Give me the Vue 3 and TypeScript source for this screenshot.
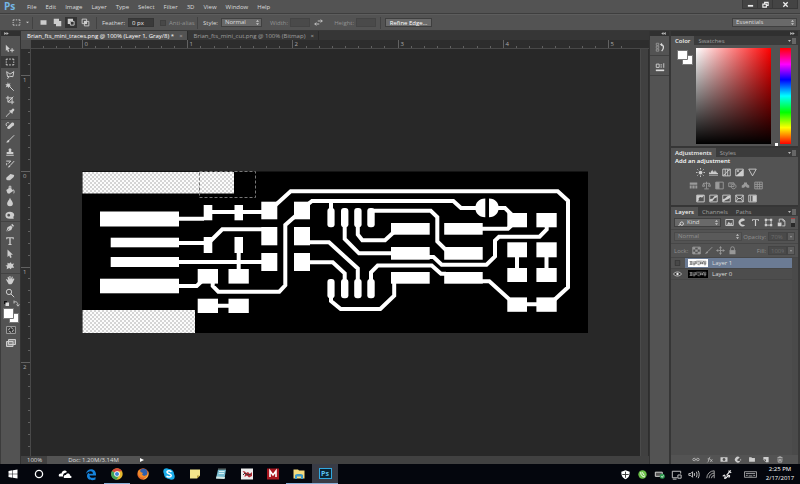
<script setup lang="ts">
import { computed, onBeforeUnmount, onMounted, ref } from 'vue'

interface Glyph { name: string; fill?: string; line?: string }
interface Layer { name: string; visible: boolean; selected: boolean; inverse: boolean }

const menus = ['File', 'Edit', 'Image', 'Layer', 'Type', 'Select', 'Filter', '3D', 'View', 'Window', 'Help']

const activeTool = ref('Rectangular marquee')
const feather = ref('0 px')
const antiAlias = ref(false)

const toolGroups: Glyph[][] = [
  [
    { name: 'Move', fill: 'M1 1L6 6H4L5 9L3.500 9.500L2.500 7L1 8.500Z', line: 'M6 7.500H11M8.500 5V10' },
    { name: 'Rectangular marquee', line: 'M1.500 4V2.500H3.500M5 2.500H7M8.500 2.500H10.500V4M10.500 5.500V7M10.500 8.500V9.500H8.500M7 9.500H5M3.500 9.500H1.500V8M1.500 6.800V5.300' },
    { name: 'Polygonal lasso', line: 'M3 8L2 2L6 5L10.500 2L9.500 8L5.500 7.500L3 8L4.500 9L3 10.500' },
    { name: 'Magic wand', fill: 'M3.500 0L4.300 2.500L6.700 1.500L5.500 3.600L7.500 5L5 5.200L4.500 7.500L3 5.500L.8 6.500L1.900 4.200L.3 2.700L2.700 2.600Z', line: 'M5 5L10.500 10.500' },
    { name: 'Crop', line: 'M3.500 1V8.500H11M1 3.500H8.500V11M3.500 8.500L10 2' },
    { name: 'Eyedropper', fill: 'M7 3L9 1C10 0 12 2 11 3L9 5L9.500 6L8.500 7L5 3.500L6 2.500Z', line: 'M6.500 5L2.500 9L1.500 10.500' },
  ],
  [
    { name: 'Healing brush', fill: 'M3 7L8 2C10 1 12 3 10.500 5L6 9C4 10.500 1.500 9 3 7Z', line: 'M2 6C0 3 3 .8 5 2.500' },
    { name: 'Brush', fill: 'M1 10C3 9.500 2.500 7.500 4.500 7L5.500 8C5 10 3 10.500 1 10Z', line: 'M5 7.500L11 1.500' },
    { name: 'Clone stamp', fill: 'M4.500 6L4.500 4C3 1 9 1 7.500 4V6H10V8.500H2V6ZM1.500 9.300H10.500V10.600H1.500Z' },
    { name: 'History brush', fill: 'M3 10C4.500 9.500 4 8 5.500 7.500L6.500 8.500C6 10 5 10.500 3 10Z', line: 'M6 8L11 2.500M1.500 2.500H7L4 5.500M2 5V7.500' },
    { name: 'Eraser', fill: 'M1.500 7L6.500 2.500L11 3.500L10.500 6L6 10H3L1.500 9Z' },
    { name: 'Paint bucket', fill: 'M1.500 6L6 3L10 7L5 10.500L3 10Z', line: 'M5 5V1.500H7V5M9.500 5.500C11.500 6 11 9 10.500 10' },
    { name: 'Blur', fill: 'M6 1C7 4 9.500 5.500 9.500 8C9.500 12 2.500 12 2.500 8C2.500 5.500 5 4 6 1Z' },
    { name: 'Sponge', fill: 'M6 2A5.500 4.200 0 1 0 6 10.400H10.500L10 8.500A5 4 0 0 0 6 2ZM4.500 4.500A1.700 1.700 0 1 1 4.400 4.500Z' },
  ],
  [
    { name: 'Pen', fill: 'M1.500 10.500L3 5L7 3L9 5L7.500 8.500L2.800 10.200L5.300 7L4.700 6.500ZM7.500 2.500L8.500 1L11 3.500L9.500 4.500Z' },
    { name: 'Type', fill: 'M1.500 1.500H10.500V4H9.500L9 2.700H6.800V9.500L8 10V10.700H4V10L5.200 9.500V2.700H3L2.500 4H1.500Z' },
    { name: 'Path selection', fill: 'M3 .5L9.500 7H6.800L8 10L6.300 10.700L5 7.800L3 9.500Z' },
    { name: 'Custom shape', fill: 'M3 2L5 3L7 1.500L8 3.500L11 3L9.500 5.500L11 8L8 8L7 10L5 8.500L2 10L2.500 7L.5 5.500L3 5Z' },
  ],
  [
    { name: 'Hand', fill: 'M1 5L2.500 5L4 6.500L3 2.500L4.300 2.200L5.300 5L5.300 1.200H6.500L7 5L8.300 1.800L9.400 2.200L8.800 5.500L10.500 4L11.300 4.800L9 9.500L7.500 11H4.500Z' },
    { name: 'Zoom', line: 'M8 4.700A3.200 3.200 0 1 1 1.600 4.700A3.200 3.200 0 1 1 8 4.700M7 7L11 11' },
  ],
]

const selectionModes: Glyph[] = [
  { name: 'New selection', fill: 'M2 3H10V9H2Z' },
  { name: 'Add to selection', fill: 'M1 1H8V4H11V11H4V8H1Z' },
  { name: 'Subtract from selection', fill: 'M1 1H8V4H4V8H1Z', line: 'M4.500 4.500H9.500V9.500H4.500Z' },
  { name: 'Intersect with selection', fill: 'M4 4H8V8H4Z', line: 'M1.500 1.500H7.500V7.500H1.500ZM4.500 4.500H10.500V10.500H4.500Z' },
]

const adjustmentRows: Glyph[][] = [
  [
    { name: 'Brightness', fill: 'M8.500 6A2.500 2.500 0 1 1 3.500 6A2.500 2.500 0 1 1 8.500 6', line: 'M6 0V2M6 10V12M0 6H2M10 6H12M1.800 1.800L3 3M9 9L10.200 10.200M10.200 1.800L9 3M3 9L1.800 10.200' },
    { name: 'Levels', fill: 'M0 8V7L1 5L2 7L3 3L4 5L5 2L6 6L7 3L8 6L9 3L10 6L12 7V8ZM0 9H12V10H0Z' },
    { name: 'Curves', line: 'M1 1.500H11V10.500H1ZM1 10C6 9 6 3 11 2M4.300 1.500V10.500M7.600 1.500V10.500' },
    { name: 'Exposure', fill: 'M11 1.500V10.500H1Z', line: 'M1 1.500H11V10.500H1ZM2.500 4H5.500M4 2.500V5.500' },
    { name: 'Vibrance', line: 'M1 1.500H11L6 10.500Z' },
  ],
  [
    { name: 'Hue', fill: 'M1 2H11V5H1ZM1 6H3.500V10H1ZM4.500 6H7.500V10H4.500ZM8.500 6H11V10H8.500Z' },
    { name: 'Color balance', line: 'M2 3H10M6 1V10M2 3L.7 7H3.500ZM10 3L8.500 7H11.300ZM3 10.500H9' },
    { name: 'Black and white', fill: 'M1 1.500H6V10.500H1Z', line: 'M1 1.500H11V10.500H1Z' },
    { name: 'Photo filter', line: 'M1 2.500H8V7.500H1ZM7.500 4A3.200 3.200 0 1 1 7.400 4M3 4H6' },
    { name: 'Channel mixer', fill: 'M4 4V2H8V4L11 6V9H8L6 7L4 9H1V6Z' },
    { name: 'Color lookup', line: 'M1 1.500H11V10.500H1ZM1 4.500H11M1 7.500H11M4.300 1.500V10.500M7.600 1.500V10.500' },
  ],
  [
    { name: 'Invert', fill: 'M1 1.500H11L8 5A2.500 2.500 0 0 0 4 8L1 10.500Z', line: 'M1 1.500H11V10.500H1Z' },
    { name: 'Posterize', fill: 'M1 7L5 6L7 3L11 2V4L7 6L5 9L1 10Z', line: 'M1 1.500H11V10.500H1Z' },
    { name: 'Threshold', fill: 'M1 7L4 6L7 3L11 2V5L8 7L5 8L1 10.500Z', line: 'M1 1.500H11V10.500H1Z' },
    { name: 'Selective color', line: 'M1 1.500H11V10.500H1ZM1 1.500L4 6L1 10.500M11 1.500L8 6L11 10.500M4 6H8' },
    { name: 'Gradient map', fill: 'M6 2H11V10H6Z', line: 'M1 1.500H11V10.500H1ZM3.500 2V10' },
  ],
]

const filterGlyphs: Glyph[] = [
  { name: 'Pixel layers', fill: 'M2.500 9L5 5L7 7.500L8.500 6L10 9Z', line: 'M1 2H11V10H1Z' },
  { name: 'Adjustment layers', fill: 'M9.500 2.500A5 5 0 1 0 9.500 9.500C7 9 3 9 3.500 6C4 4 8 4 9.500 2.500Z' },
  { name: 'Type layers', fill: 'M1.500 1.500H10.500V4H9.500L9 2.700H6.800V10.500H5.200V2.700H3L2.500 4H1.500Z' },
  { name: 'Shape layers', fill: 'M1 1H4V4H1ZM8 1H11V4H8ZM1 8H4V11H1ZM8 8H11V11H8Z', line: 'M2.500 3V9M9.500 3V9M3 2.500H9M3 9.500H9' },
  { name: 'Smart objects', fill: 'M1 6H6V11H1Z', line: 'M3 5V1.500H8L10.500 4V10.500H7M8 1.500V4H10.500' },
]

const lockGlyphs: Glyph[] = [
  { name: 'Lock transparent pixels', fill: 'M1 1.500H4.300V4.500H1ZM7.600 1.500H11V4.500H7.600ZM4.300 4.500H7.600V7.500H4.300ZM1 7.500H4.300V10.500H1ZM7.600 7.500H11V10.500H7.600Z', line: 'M1 1.500H11V10.500H1Z' },
  { name: 'Lock image pixels', fill: 'M1 10C3 9.500 2.500 7.500 4.500 7L5.500 8C5 10 3 10.500 1 10Z', line: 'M5 7.500L11 1.500' },
  { name: 'Lock position', fill: 'M6 0L8 3H4ZM6 12L4 9H8ZM0 6L3 4V8ZM12 6L9 8V4Z', line: 'M6 3V9M3 6H9' },
  { name: 'Lock all', fill: 'M2 5.500H10V11H2Z', line: 'M3.500 6V3.500A2.500 2.500 0 0 1 8.500 3.500V6' },
]

const layerActions: Glyph[] = [
  { name: 'Link layers', line: 'M5 4H2.500A2 2 0 0 0 2.500 8H5M7 4H9.500A2 2 0 0 1 9.500 8H7M4 6H8' },
  { name: 'Layer style', line: 'M1.500 11C4 11 3.500 2 6.500 1.500M2 5H6M6.500 5.500L10 10M10 5.500L6.500 10' },
  { name: 'Add mask', fill: 'M0 2H12V10H0ZM6 3.500A2.500 2.500 0 1 0 6.100 3.500Z' },
  { name: 'Adjustment layer', fill: 'M9 2.500A5 5 0 1 0 9.500 9.500L8.500 8C6 10 3 7 6 5Z', line: 'M10.500 5V8' },
  { name: 'New group', fill: 'M1 2H5L6 3.500H11V10H1Z' },
  { name: 'New layer', fill: 'M1.500 1.500H10.500V10.500H6V6H1.500Z', line: 'M1.500 6L6 10.500' },
  { name: 'Delete', line: 'M1.500 3H10.500M4 3V1.500H8V3M2.500 4.500L3 10.500H9L9.500 4.500M5 5V9M7 5V9' },
]

const layers = ref<Layer[]>([
  { name: 'Layer 1', visible: false, selected: true, inverse: true },
  { name: 'Layer 0', visible: true, selected: false, inverse: false },
])

/* Rulers hold eight ticks per inch, measured from the board's top-left corner */
const canvas = ref<HTMLElement | null>(null)
const canvasSize = ref({ width: 610, height: 407 })
let observer: ResizeObserver | undefined

onMounted(() => {
  observer = new ResizeObserver(([entry]) => {
    canvasSize.value = { width: entry.contentRect.width, height: entry.contentRect.height }
  })
  if (canvas.value) observer.observe(canvas.value)
})
onBeforeUnmount(() => observer?.disconnect())

function ticks(length: number, boardLength: number, step: number) {
  const origin = Math.floor((length - boardLength) / 2)
  const first = Math.ceil(-origin / step)
  const last = Math.floor((length - 9 - origin) / step)
  return Array.from({ length: Math.max(0, last - first + 1) }, (_, i) => first + i).map((i) => ({
    at: Math.round(origin + i * step) + 0.5,
    label: i % 8 === 0 ? String(Math.abs(i / 8)) : '',
  }))
}
const hTicks = computed(() => ticks(canvasSize.value.width, 507, 13.15))
const vTicks = computed(() => ticks(canvasSize.value.height, 163, 11.94))

/* Copper pads: x, y, width, height, corner radius */
const pads: number[][] = [
  [100, 211.5, 79, 15, 0], [110.7, 237.7, 68.3, 9.6, 0], [110.7, 257, 68.3, 10, 0], [100, 278.7, 79, 14.6, 0],
  [203.7, 205, 8.6, 15.3, 0], [234.5, 205, 8.5, 15.3, 0], [203.7, 237, 8.6, 16, 0], [234.5, 237, 8.5, 16, 0],
  [197.7, 269, 20.3, 14.6, 0], [228.5, 269, 20.3, 14.6, 0], [197.7, 298.7, 20.3, 14.3, 0], [228.5, 298.7, 20.3, 14.3, 0],
  [261.3, 201.7, 16, 17.6, 0], [261.3, 227, 16, 18.3, 0], [261.3, 253, 16, 18, 0],
  [294, 201.7, 16, 17.6, 0], [294, 227, 16, 18.3, 0], [294, 253, 16, 18, 0],
  [327.4, 208, 7.2, 19.3, 3], [341, 208, 7.4, 19.3, 3], [354.2, 208, 7.4, 19.3, 3], [367.3, 208, 7.4, 19.3, 3],
  [327.4, 279, 7.2, 19.3, 3], [341, 279, 7.4, 19.3, 3], [354.2, 279, 7.4, 19.3, 3], [367.3, 279, 7.4, 19.3, 3],
  [391, 223, 38.7, 11.7, 0], [391, 247, 38.7, 12.7, 0], [391, 272, 38.7, 11.7, 0],
  [444.2, 223, 38.5, 11.7, 0], [444.2, 247, 38.5, 12.7, 0], [444.2, 272, 38.5, 11.7, 0],
  [507.3, 213, 19.7, 14.3, 0], [536.4, 213, 20.3, 14.3, 0], [507.3, 242.3, 19.7, 15, 0], [536.4, 242.3, 20.3, 15, 0],
  [507.3, 268, 19.7, 14, 0], [536.4, 268, 20.3, 14, 0], [507.3, 297.4, 19.7, 14.4, 0], [536.4, 297.4, 20.3, 14.4, 0],
]

const tracePath = [
  'M178 218.700H204M212 212H262M178 243H204M208 243.500L222.300 229.300H262M238.700 252V270M178 262H262',
  'M178 286H196.700L203 280M212.700 282V286L218.300 291.700H279.300L285.300 285.300V225L296 215.500M217 305.700H229',
  'M275 205.500L290.700 191.300H557.700L568 200.700V287.300L552 302M307 205L312 201H453.300L461 208H480M331 201V210',
  'M344.700 226V239L359 253.300H392M357.800 226V234.500L362.300 240.300H385L394 232M371 210.700H430.700L437.300 217V241.500L446 250',
  'M309 242.300H329L357.800 268.500V281M309 262.300H332.700L344.700 273.300V281M371 281V272.300L377.700 265.500H431.700L441 273.700H446',
  'M331 297V301L340.700 309H380.300L394.200 295.700V282M429 257H433.500L441.700 264.700H486.500L495 256.500V240.500L499 236.700H539.500L546.700 229.500V226',
  'M482 228.700H508L513 224M496 208H505L512 215M517 256V269M546.500 256V269M526 304.300H537M482 281.300H489.300L509 299',
].join('')
</script>

<template>
  <div class="app">
    <svg class="defs" aria-hidden="true">
      <defs>
        <symbol id="traces" viewBox="82 171 507 163">
          <path :d="tracePath" fill="none" stroke="currentColor" stroke-width="4" />
          <rect v-for="(p, i) in pads" :key="i" :x="p[0]" :y="p[1]" :width="p[2]" :height="p[3]" :rx="p[4]" fill="currentColor" />
          <path d="M485.300 198.500V217.300C472 217.300 472 198.500 485.300 198.500ZM489 198.500V217.300C502 217.300 502 198.500 489 198.500Z" fill="currentColor" />
        </symbol>
        <symbol id="expand" viewBox="0 0 6 4"><path d="M0 0L3 2L0 4ZM3 0L6 2L3 4Z" fill="#bbb" /></symbol>
        <symbol id="panel-menu" viewBox="0 0 8 6"><path d="M0 2H3L1.500 4Z" fill="#bbb" /><path d="M4 1H8M4 3H8M4 5H8" stroke="#aaa" stroke-width=".8" /></symbol>
      </defs>
    </svg>

    <header class="menubar">
      <span class="brand">Ps</span>
      <nav class="menus"><button v-for="m in menus" :key="m" type="button">{{ m }}</button></nav>
      <div class="window-buttons">
        <button type="button" aria-label="Minimize"><svg viewBox="0 0 8 8"><path d="M1 5.500H7" stroke-width="2" /></svg></button>
        <button type="button" aria-label="Restore"><svg viewBox="0 0 8 8"><path d="M3 4V1.500H7V5H5M1 3.500H5V7H1Z" stroke-width="1.300" /></svg></button>
        <button type="button" aria-label="Close"><svg viewBox="0 0 8 8"><path d="M1.500 1.500L6.500 6.500M6.500 1.500L1.500 6.500" stroke-width="1.500" /></svg></button>
      </div>
    </header>

    <section class="options">
      <button class="preset" type="button" aria-label="Tool preset">
        <svg class="glyph" viewBox="0 0 12 12"><path class="line" :d="toolGroups[0][1].line" /></svg>
        <svg class="caret" viewBox="0 0 4 4"><path d="M0 1H4L2 3Z" /></svg>
      </button>
      <div class="modes">
        <button v-for="(g, i) in selectionModes" :key="g.name" type="button" :aria-label="g.name" :class="{ on: i === 2 }">
          <svg class="glyph" viewBox="0 0 12 12"><path v-if="g.fill" class="fill" :d="g.fill" /><path v-if="g.line" class="line" :d="g.line" /></svg>
        </button>
      </div>
      <div class="field feather"><label for="feather">Feather:</label><input id="feather" v-model="feather" type="text" /></div>
      <div class="field alias dim"><input id="alias" v-model="antiAlias" type="checkbox" disabled /><label for="alias">Anti-alias</label></div>
      <div class="field style"><label for="style">Style:</label>
        <span class="drop"><select id="style"><option>Normal</option></select></span>
      </div>
      <div class="field size dim"><label for="w">Width:</label><input id="w" type="text" disabled /></div>
      <button class="swap" type="button" aria-label="Swap width and height"><svg class="glyph" viewBox="0 0 12 12"><path class="line" d="M1 8H7M3 6L1 8L3 10M5 4H11M9 2L11 4L9 6" /></svg></button>
      <div class="field size dim"><label for="h">Height:</label><input id="h" type="text" disabled /></div>
      <div class="refine"><button type="button">Refine Edge...</button></div>
      <span class="drop essentials"><select aria-label="Workspace"><option>Essentials</option></select></span>
    </section>

    <main class="workspace">
      <aside class="toolbar">
        <div class="grip"><svg><use href="#expand" /></svg></div>
        <div class="tools">
          <div v-for="(group, gi) in toolGroups" :key="gi" class="group" :style="{ flexGrow: group.length }">
            <button v-for="t in group" :key="t.name" type="button" :aria-label="t.name" :class="{ on: t.name === activeTool }" @click="activeTool = t.name">
              <svg class="glyph" viewBox="0 0 12 12"><path v-if="t.fill" class="fill" fill-rule="evenodd" :d="t.fill" /><path v-if="t.line" class="line" :d="t.line" /></svg>
            </button>
          </div>
        </div>
        <svg class="colors" viewBox="0 0 20 56">
          <path d="M3 2H6V5H3Z" fill="#111" /><path d="M4.500 3.500H8V7H4.500Z" fill="#ddd" />
          <path d="M13 3C16 2 17 4 17 7M13 1.500V4.500M15.500 5.500L17 7.200L18.500 5.500" fill="none" stroke="#bbb" />
          <path d="M8.500 14.500H17.500V23.500H8.500Z" fill="#fff" stroke="#777" />
          <path d="M2.500 9.500H12.500V19.500H2.500Z" fill="#fff" stroke="#777" />
          <path d="M5.500 27.500H14.500V34.500H5.500Z" fill="#444" stroke="#999" /><circle cx="10" cy="31" r="2.200" fill="#333" stroke="#ccc" stroke-dasharray="2 1" />
          <path d="M7.500 40.500H14.500V45.500H7.500ZM5.500 42.500H12V47.500H5.500Z" fill="#888" stroke="#ccc" />
        </svg>
      </aside>

      <section class="document">
        <div class="tabs">
          <button class="active" type="button"><span>Brian_fts_mini_traces.png @ 100% (Layer 1, Gray/8) *</span><i>×</i></button>
          <button type="button"><span>Brian_fts_mini_cut.png @ 100% (Bitmap)</span><i>×</i></button>
        </div>
        <div class="view">
          <div class="corner"></div>
          <svg class="ruler-h">
            <g v-for="t in hTicks" :key="t.at">
              <line :x1="t.at" :x2="t.at" :y1="t.label ? 0 : 6" y2="9" /><text v-if="t.label" :x="t.at + 2" y="6">{{ t.label }}</text>
            </g>
          </svg>
          <svg class="ruler-v">
            <g v-for="t in vTicks" :key="t.at">
              <line :y1="t.at" :y2="t.at" :x1="t.label ? 0 : 7" x2="10" /><text v-if="t.label" :y="t.at + 6" x="2">{{ t.label }}</text>
            </g>
          </svg>
          <div ref="canvas" class="canvas">
            <svg class="board" viewBox="82 171 507 163">
              <defs>
                <pattern id="checks" width="4" height="4" patternUnits="userSpaceOnUse">
                  <rect width="4" height="4" fill="#fcfcfc" /><path d="M0 0H2V2H0ZM2 2H4V4H2Z" fill="#d4d4d4" />
                </pattern>
              </defs>
              <rect x="82" y="171.500" width="506" height="161.500" fill="#000" />
              <rect x="82.500" y="172" width="151.500" height="21.500" fill="url(#checks)" />
              <rect x="82.500" y="310" width="112.500" height="23" fill="url(#checks)" />
              <use href="#traces" x="82" y="171" width="507" height="163" class="copper" />
              <rect x="199.500" y="171.500" width="56" height="26" fill="none" stroke="#777" stroke-dasharray="3 2" />
            </svg>
          </div>
          <div class="vscroll"></div>
        </div>
        <footer class="status"><span class="zoom">100%</span><span class="info">Doc: 1.20M/3.14M</span><svg viewBox="0 0 4 4"><path d="M0 0L4 2L0 4Z" /></svg></footer>
      </section>

      <aside class="strip">
        <div class="grip end"><svg class="flip"><use href="#expand" /></svg></div>
        <button type="button" aria-label="History"><svg viewBox="0 0 12 12"><path d="M1.500 1.500H4.500V4H1.500ZM1.500 5H4.500V7.500H1.500ZM1.500 8.500H4.500V11H1.500Z" fill="none" stroke="#aaa" stroke-width=".8" /><path d="M7 3C11 3 11 8 8 11" fill="none" stroke="#ddd" stroke-width="1.500" /><path d="M6 3L8.500 1V5Z" fill="#ddd" /></svg></button>
        <button type="button" aria-label="Properties"><svg viewBox="0 0 12 12"><path d="M1.500 2.500H5V6.500H1.500ZM6.500 3.500H8.500M6.500 6H8.500M10.500 1.500V7" fill="none" stroke="#ddd" /><path d="M1 9H11V11H1Z" fill="#ddd" /></svg></button>
      </aside>

      <aside class="panels">
        <div class="grip end"><svg><use href="#expand" /></svg></div>
        <section class="panel">
          <div class="ptabs"><button class="active" type="button">Color</button><button type="button">Swatches</button><svg><use href="#panel-menu" /></svg></div>
          <div class="color">
            <svg class="pair" viewBox="0 0 16 16"><path d="M5.500 5.500H15.500V14.500H5.500Z" /><path d="M.5 .5H10.500V9.500H.5Z" /></svg>
            <div class="field2d"></div>
            <div class="hue"></div>
          </div>
        </section>
        <section class="panel">
          <div class="ptabs"><button class="active" type="button">Adjustments</button><button type="button">Styles</button><svg><use href="#panel-menu" /></svg></div>
          <div class="adjust">
            <h2>Add an adjustment</h2>
            <div v-for="(row, ri) in adjustmentRows" :key="ri" class="arow" :class="{ faint: ri === 1 }">
              <button v-for="g in row" :key="g.name" type="button" :aria-label="g.name">
                <svg class="glyph" viewBox="0 0 12 12"><path v-if="g.fill" class="fill" :d="g.fill" /><path v-if="g.line" class="line" :d="g.line" /></svg>
              </button>
            </div>
          </div>
        </section>
        <section class="panel layers">
          <div class="ptabs"><button class="active" type="button">Layers</button><button type="button">Channels</button><button type="button">Paths</button><svg><use href="#panel-menu" /></svg></div>
          <div class="lrow">
            <span class="drop kind"><svg viewBox="0 0 6 6"><path d="M5 2.500A1.700 1.700 0 1 1 4.900 2.400M2.500 4L.5 6" fill="none" stroke="#ddd" /></svg><select aria-label="Filter type"><option>Kind</option></select></span>
            <div class="filters">
              <button v-for="g in filterGlyphs" :key="g.name" type="button" :aria-label="g.name">
                <svg class="glyph" viewBox="0 0 12 12"><path v-if="g.fill" class="fill" :d="g.fill" /><path v-if="g.line" class="line" :d="g.line" /></svg>
              </button>
            </div>
            <button class="toggle" type="button" aria-label="Toggle filtering"></button>
          </div>
          <div class="lrow dim">
            <span class="drop blend"><select aria-label="Blend mode" disabled><option>Normal</option></select></span>
            <div class="amount"><label for="opacity">Opacity:</label><input id="opacity" type="text" value="70%" disabled /><svg viewBox="0 0 8 9"><path d="M2.500 4H5.500L4 6Z" /></svg></div>
          </div>
          <div class="lrow dim">
            <span>Lock:</span>
            <div class="locks">
              <button v-for="g in lockGlyphs" :key="g.name" type="button" :aria-label="g.name">
                <svg class="glyph" viewBox="0 0 12 12"><path v-if="g.fill" class="fill" :d="g.fill" /><path v-if="g.line" class="line" :d="g.line" /></svg>
              </button>
            </div>
            <div class="amount"><label for="fill">Fill:</label><input id="fill" type="text" value="100%" disabled /><svg viewBox="0 0 8 9"><path d="M2.500 4H5.500L4 6Z" /></svg></div>
          </div>
          <ul class="list">
            <li v-for="l in layers" :key="l.name" :class="{ selected: l.selected }">
              <button class="eye" type="button" :aria-label="'Show ' + l.name" @click="l.visible = !l.visible">
                <svg v-if="l.visible" viewBox="0 0 12 8"><path d="M.5 4C3 .5 9 .5 11.500 4C9 7.500 3 7.500 .5 4Z" fill="#333" stroke="#ddd" /><circle cx="6" cy="4" r="1.600" fill="#eee" /></svg>
                <svg v-else viewBox="0 0 12 8"><path d="M3 .5H9V7.500H3Z" fill="#484848" stroke="#333" /></svg>
              </button>
              <svg class="thumb" viewBox="0 0 20 8" :class="{ inverse: l.inverse }"><rect width="20" height="8" /><use href="#traces" x="1" y="1" width="18" height="6" /></svg>
              <span>{{ l.name }}</span>
            </li>
          </ul>
          <footer class="lactions">
            <button v-for="g in layerActions" :key="g.name" type="button" :aria-label="g.name">
              <svg class="glyph" viewBox="0 0 12 12"><path v-if="g.fill" class="fill" fill-rule="evenodd" :d="g.fill" /><path v-if="g.line" class="line" :d="g.line" /></svg>
            </button>
          </footer>
        </section>
      </aside>
    </main>

    <footer class="taskbar">
      <nav class="apps">
        <button type="button" aria-label="Start"><svg viewBox="0 0 14 14"><path d="M2.500 4L6.500 3.300V6.700H2.500ZM7 3.200L11.500 2.500V6.700H7ZM2.500 7.300H6.500V10.700L2.500 10ZM7 7.300H11.500V11.500L7 10.800Z" fill="#fff" /></svg></button>
        <button type="button" aria-label="Search"><svg viewBox="0 0 14 14"><circle cx="7" cy="7" r="3.600" fill="none" stroke="#fff" stroke-width="1.300" /></svg></button>
        <button type="button" aria-label="OneDrive"><svg viewBox="0 0 14 14"><path d="M1 9.500C0 7 2 6 3.500 6.500C4 3 8 2.500 9 5L7 6C5 6.500 5 8 5 9.500Z" fill="#fff" /><path d="M6 11C5 9 6.500 7.500 8 8C8.500 6 12 6 12 8.500C14 9 14 11 12.500 11Z" fill="#fff" /></svg></button>
        <button type="button" aria-label="Edge"><svg viewBox="0 0 14 14"><path d="M2 7C2.500 .5 12 .5 12 7.500V8.500H5.500C5.500 11 9 11.500 11.500 10V12.500C8 14 3 13 3 9C3 7.500 4 6 5.500 5.300C5 5.800 5 6.500 5 6.800H9C9 3.500 4.500 3.500 2 7Z" fill="#1683dc" /></svg></button>
        <button class="running" type="button" aria-label="Chrome"><svg viewBox="0 0 14 14"><circle cx="7" cy="7" r="5.700" fill="#e8b92f" /><path d="M7 7L2 4A5.700 5.700 0 0 1 12 4.200H7Z" fill="#d9483b" /><path d="M7 7L2 4A5.700 5.700 0 0 0 6.500 12.700L9 8.500Z" fill="#42a257" /><circle cx="7" cy="7" r="2.800" fill="#fff" /><circle cx="7" cy="7" r="2" fill="#4285d4" /></svg></button>
        <button type="button" aria-label="Firefox"><svg viewBox="0 0 14 14"><circle cx="7" cy="7" r="5.700" fill="#e4672b" /><circle cx="7.500" cy="5.600" r="3.800" fill="#2d5fae" /><path d="M2 4L4 2.500L4.500 5L7 6L6 7.500L8 9L11 8C9 12 3 11 2 7Z" fill="#f08b2c" /><path d="M12 4C13.500 8 11 12 7 12.500C11 10 12 8 12 4Z" fill="#f6c544" /></svg></button>
        <button type="button" aria-label="Skype"><svg viewBox="0 0 14 14"><circle cx="7" cy="7" r="5" fill="#1badea" /><circle cx="4.500" cy="4.500" r="3.200" fill="#1badea" /><circle cx="9.500" cy="9.500" r="3.200" fill="#1badea" /><path d="M9.300 5C8.500 3.200 4.800 3.500 5 5.200C5.200 7 9.400 6.500 9.300 8.600C9 10.500 5.200 10.500 4.700 8.700" fill="none" stroke="#fff" stroke-width="1.500" /></svg></button>
        <button type="button" aria-label="Sticky notes"><svg viewBox="0 0 14 14"><path d="M2 2.500H12V8.500L9 11.500H2Z" fill="#f3e58c" /><path d="M9 11.500V8.500H12Z" fill="#b9a13f" /></svg></button>
        <button type="button" aria-label="Notepad"><svg viewBox="0 0 14 14"><path d="M4 2.500H12L10.500 11.500H2Z" fill="#79bdd1" /><path d="M5 4.500H10.500M4.700 6.500H10" stroke="#d9f1f6" /><path d="M2 11.500L2.500 9.500L11 10L10.500 12Z" fill="#d8e7e3" /><path d="M4 2H12" stroke="#64726f" /></svg></button>
        <button type="button" aria-label="Image viewer"><svg viewBox="0 0 14 14"><path d="M1 1.500H13V12.500H1Z" fill="#eee" /><path d="M2.500 4L5 4.500L6 6L8 5L10 7L12 5V9L9 10.500L7 8.500L4.500 10L5 7Z" fill="#b52c36" /><path d="M3 8L5 6L8 8L11 7" fill="none" stroke="#433" /></svg></button>
        <button type="button" aria-label="Mendeley"><svg viewBox="0 0 14 14"><rect x="1" y="1.500" width="12" height="11" fill="#a81720" /><path d="M4 10V4L7 8L10 4V10" fill="none" stroke="#fff" stroke-width="1.600" /></svg></button>
        <button class="running" type="button" aria-label="File Explorer"><svg viewBox="0 0 14 14"><path d="M1.500 2.500H6L7 3.500H12.500V11.500H1.500Z" fill="#f5dc7f" /><path d="M3 12V8C3 6.500 11 6.500 11 8V12H9V9.500H5V12Z" fill="#3f9ac9" /></svg></button>
        <button class="running current" type="button"><span class="ps">Ps</span></button>
      </nav>
      <div class="tray">
        <svg viewBox="0 0 14 14"><path d="M7 2.500L11.500 4C11.500 9 10 10.500 7 12C4 10.500 2.500 9 2.500 4Z" fill="#fff" /><path d="M7 4V10.500M3.500 7H10.500" stroke="#333" /></svg>
        <svg viewBox="0 0 14 14"><circle cx="7" cy="7" r="4.500" fill="#6cc04a" /><path d="M5 4.500C5 8 7 9.500 9.500 9.500M6.500 4.500L9 8" fill="none" stroke="#fff" /></svg>
        <svg viewBox="0 0 14 14"><path d="M2.500 4.500H10V9H2.500Z" fill="#555" stroke="#ddd" /><circle cx="10" cy="9" r="2.700" fill="#2f9b50" /><path d="M8.800 9L10 10L11.300 8" fill="none" stroke="#fff" stroke-width=".8" /></svg>
        <svg viewBox="0 0 14 14"><path d="M8 10.500H2.500V3.500H11.500V6M3 12H7M8.500 7.500H12V11H8.500Z" fill="none" stroke="#ccc" /></svg>
        <svg viewBox="0 0 14 14"><path d="M2 6H4L6 4V10L4 8H2ZM8 5.500V8.500M10 4C11 6 11 8 10 10M12 3C13.500 6 13.500 8 12 11" fill="none" stroke="#ccc" /></svg>
        <svg viewBox="0 0 14 14"><path d="M3 11A8 8 0 0 1 11 3M5.500 11A5.500 5.500 0 0 1 11 5.500M8 11A3 3 0 0 1 11 8M11 3V11" fill="none" stroke="#aaa" /></svg>
        <svg viewBox="0 0 14 14"><path d="M10.500 2.500L6 8M2 9C4 6 5 9 4 11C6 12 7 7 9 8C10 9 8 10 8 10M8 3L11 5" fill="none" stroke="#eee" stroke-width="1.300" /></svg>
        <svg class="keyboard" viewBox="0 0 14 14"><path d="M.5 4H13.500V10H.5ZM2 6H12M2 8H4M5 8.500H9M10 8H12" fill="none" stroke="#ccc" stroke-width=".8" /></svg>
        <time datetime="2017-02-17T14:25"><span>2:25 PM</span><span>2/17/2017</span></time>
      </div>
    </footer>
  </div>
</template>

<style>
body { margin: 0; background: #282828; }
</style>

<style scoped>
* { box-sizing: border-box; }
.app { display: flex; flex-direction: column; min-height: 100vh; color: #dcdcdc; background: #282828; font: 6px/8px "Open Sans", "Noto Sans", sans-serif; overflow: hidden; }
.defs { position: absolute; width: 0; height: 0; }
button, input, select { font: inherit; color: inherit; margin: 0; padding: 0; border: 0; background: none; border-radius: 0; }
button { display: flex; align-items: center; justify-content: center; white-space: nowrap; }
svg { display: block; flex: none; }
i { font-style: normal; }
.glyph { width: 9px; height: 9px; }
.fill { fill: #cdcdcd; }
.line { fill: none; stroke: #cdcdcd; stroke-width: 1.2; }
.dim { color: #929292; }
.dim .fill { fill: #989898; }
.dim .line { stroke: #989898; }

.menubar { display: flex; height: 14px; background: #535353; border-bottom: 1px solid #3e3e3e; }
.brand { width: 27px; padding-left: 4px; font: bold 10px/13px "Open Sans", sans-serif; color: #74b5e4; }
.menus { display: flex; gap: 9px; flex: 1; }
.window-buttons { display: flex; height: 9px; margin-right: 2px; background: #444; border: 1px solid #383838; border-top: 0; }
.window-buttons button { width: 15px; border-right: 1px solid #383838; }
.window-buttons button:last-child { width: 24px; border: 0; }
.window-buttons svg { width: 7px; height: 7px; fill: none; stroke: #eee; }

.options { display: flex; align-items: center; height: 17px; background: #535353; border-top: 1px solid #5d5d5d; border-bottom: 1px solid #383838; }
.preset { width: 33px; padding-left: 8px; gap: 5px; height: 12px; border-right: 1px solid #424242; }
.caret { width: 3px; height: 3px; fill: #ccc; }
.modes { display: flex; gap: 2px; width: 64px; height: 12px; padding-left: 4px; border-right: 1px solid #424242; }
.modes button { width: 12px; height: 11px; }
.modes .on { background: #333; }
.field { display: flex; align-items: center; gap: 3px; }
.field input[type="text"] { height: 9px; padding: 0 3px; background: #3a3a3a; color: #eee; border: 1px solid #353535; }
.feather { width: 57px; padding-left: 5px; }
.feather input { flex: 1; width: 0; }
.alias { width: 44px; padding-left: 6px; height: 12px; border-right: 1px solid #424242; }
.alias input { appearance: none; width: 6px; height: 6px; background: #484848; border: 1px solid #404040; }
.style { width: 64px; padding-left: 5px; }
.drop { position: relative; display: flex; align-items: center; flex: 1; height: 9px; background: #696969; border: 1px solid #404040; }
.drop select { appearance: none; width: 100%; height: 7px; padding: 0 3px; line-height: 7px; outline: 0; }
.drop select:disabled { opacity: 1; color: #929292; }
.drop::after { content: ""; position: absolute; right: 2px; top: 1px; width: 3px; height: 5px; background: #ccc; clip-path: polygon(50% 0, 100% 35%, 0 35%, 0 65%, 100% 65%, 50% 100%, 0 65%, 0 35%); }
.size { margin-left: 8px; gap: 2px; }
.field.size input[type="text"] { width: 20px; background: #4a4a4a; border-color: #444; }
.swap { width: 16px; }
.refine { margin-left: 4px; padding-left: 4px; height: 12px; border-left: 1px solid #424242; display: flex; align-items: center; }
.refine button { width: 47px; height: 9px; background: #6b6b6b; border: 1px solid #3e3e3e; color: #fff; }
.essentials { flex: none; width: 65px; margin: 0 3px 0 auto; }

.workspace { flex: 1; display: flex; min-height: 0; background: #323232; }
.grip { display: flex; align-items: center; height: 5px; padding: 0 3px; background: #303030; }
.grip.end { justify-content: flex-end; }
.grip svg { width: 5px; height: 3px; }
.grip .flip { transform: rotate(180deg); }
.toolbar { width: 21px; background: #535353; border-right: 1px solid #333; border-left: 1px solid #3c3c3c; }
.toolbar .grip { margin-bottom: 7px; }
.tools { display: flex; flex-direction: column; height: 256px; }
.group { display: flex; flex-direction: column; flex-basis: 0; border-bottom: 1px solid #424242; }
.group:last-child { border: 0; }
.group button { flex: 1; width: 17px; margin: 0; min-height: 0; }
.group .on { background: #383838; }
.tools .glyph { width: 10px; height: 10px; }
.colors { width: 20px; height: 56px; }

.document { flex: 1; min-width: 0; display: flex; flex-direction: column; }
.tabs { display: flex; height: 9px; background: #363636; }
.tabs button { gap: 5px; padding: 0 4px 0 6px; color: #a0a0a0; border-right: 1px solid #2b2b2b; }
.tabs .active { background: #535353; color: #fff; }
.tabs i { color: #aaa; }
.view { flex: 1; min-height: 0; display: grid; grid-template: 9px 1fr / 10px 1fr 9px; background: #282828; }
.corner { background: #4c4c4c; }
.ruler-h, .ruler-v { width: 100%; height: 100%; background: #2d2d2d; overflow: hidden; }
.ruler-h { grid-column: 2 / 4; border-bottom: 1px solid #484848; }
.ruler-v { min-height: 0; border-right: 1px solid #484848; contain: size; }
.view line { stroke: #626262; }
.view text { fill: #aaa; font-size: 6px; }
.canvas { display: flex; align-items: center; justify-content: center; min-width: 0; min-height: 0; }
.board { width: 507px; height: 163px; }
.copper { color: #fff; }
.vscroll { background: #404040; border-left: 1px solid #4a4a4a; border-right: 1px solid #2e2e2e; }
.status { display: flex; align-items: center; height: 8px; background: #414141; line-height: 8px; }
.status .zoom { width: 26px; padding-left: 6px; }
.status .info { width: 93px; text-align: center; background: #535353; align-self: stretch; }
.status svg { width: 4px; height: 4px; fill: #fff; }

.strip { width: 22px; background: #535353; border-left: 1px solid #333; border-right: 2px solid #363636; }
.strip button { width: 100%; height: 20px; padding-top: 2px; border-bottom: 1px solid #404040; }
.strip button svg { width: 10px; height: 10px; }

.panels { width: 129px; display: flex; flex-direction: column; padding-right: 2px; background: #3a3a3a; }
.panel { background: #535353; border-bottom: 2px solid #363636; }
.ptabs { display: flex; align-items: stretch; height: 9px; background: #3b3b3b; color: #a0a0a0; }
.ptabs button { padding: 0 4px; }
.ptabs .active { background: #535353; color: #f0f0f0; font-weight: 600; }
.ptabs svg { width: 8px; height: 6px; margin: 2px 2px 0 auto; }
.color { display: flex; gap: 3px; height: 101px; padding: 3px 7px 2px 6px; }
.pair { width: 16px; height: 16px; margin-top: 2px; fill: #fff; stroke: #777; }
.field2d { flex: 1; height: 96px; margin-right: 6px; background: linear-gradient(to top, #000, transparent), linear-gradient(to right, #fff, #f00); }
.hue { position: relative; width: 11px; height: 96px; background: linear-gradient(#f00, #f0f 17%, #00f 33%, #0ff 50%, #0f0 67%, #ff0 83%, #f00); }
.hue::before { content: ""; position: absolute; left: -5px; bottom: -2px; width: 3px; height: 3px; background: #fff; }
.adjust { height: 48px; padding-left: 18px; }
.adjust h2 { margin: 0 0 1px -14px; font-size: 6px; line-height: 8px; font-weight: 600; color: #fff; }
.arow { display: flex; gap: 4px; height: 13px; align-items: center; padding-left: 7px; }
.arow.faint { padding-left: 0; }
.arow.faint .fill { fill: #9a9a9a; }
.arow.faint .line { stroke: #9a9a9a; }
.layers { flex: 1; display: flex; flex-direction: column; border-bottom: 0; background: #4d4d4d; }
.lrow { display: flex; align-items: center; height: 14px; padding: 0 3px; background: #535353; border-bottom: 1px solid #474747; }
.kind { flex: none; width: 47px; }
.kind svg { width: 6px; height: 6px; margin-left: 3px; }
.filters { display: flex; gap: 4px; padding-left: 4px; }
.toggle { width: 4px; height: 9px; margin-left: auto; background: linear-gradient(#a44 0 1px, #777 1px 5px, #2a2a2a 5px); }
.blend { flex: none; width: 68px; background: #5a5a5a; border-color: #4a4a4a; }
.amount { display: flex; align-items: center; margin-left: auto; gap: 2px; }
.amount input { width: 19px; height: 9px; padding: 0 2px; background: #4a4a4a; border: 1px solid #444; color: #6e6e6e; }
.amount svg { width: 8px; height: 9px; margin-left: -2px; background: #5d5d5d; border: 1px solid #444; fill: #aaa; }
.locks { display: flex; gap: 3px; padding-left: 4px; }
.list { flex: 1; margin: 0; padding: 0; list-style: none; border-right: 6px solid #4a4a4a; }
.list li { display: flex; align-items: center; height: 11px; gap: 4px; border-bottom: 1px solid #464646; }
.list li.selected { background: linear-gradient(to right, #535353 14px, #6b7b94 14px); }
.eye { width: 13px; height: 10px; }
.eye svg { width: 9px; height: 6px; }
.thumb { width: 20px; height: 8px; color: #fff; fill: #000; }
.thumb.inverse { color: #000; fill: #fff; }
.lactions { display: flex; justify-content: flex-end; gap: 6px; height: 9px; padding-right: 14px; background: #535353; }
.lactions .glyph { width: 8px; height: 7px; }
.lactions button { width: 8px; }

.taskbar { display: flex; justify-content: space-between; height: 20px; background: #04060d; color: #fff; }
.apps { display: flex; }
.apps button { width: 26px; border-bottom: 1px solid transparent; }
.apps svg { width: 14px; height: 14px; }
.apps .running { border-bottom-color: #88aed6; }
.apps .current { background: #393c46; }
.ps { width: 13px; height: 11px; border: 1px solid #31a8e0; background: #0b2433; color: #5cc4f5; font: bold 7px/9px "Open Sans", sans-serif; text-align: center; }
.tray { display: flex; align-items: center; padding-right: 3px; }
.tray svg { width: 13px; height: 13px; margin: 0 2px; }
.tray .keyboard { margin: 0 6px 0 8px; }
.tray time { display: flex; flex-direction: column; align-items: center; width: 34px; line-height: 9px; }
</style>
